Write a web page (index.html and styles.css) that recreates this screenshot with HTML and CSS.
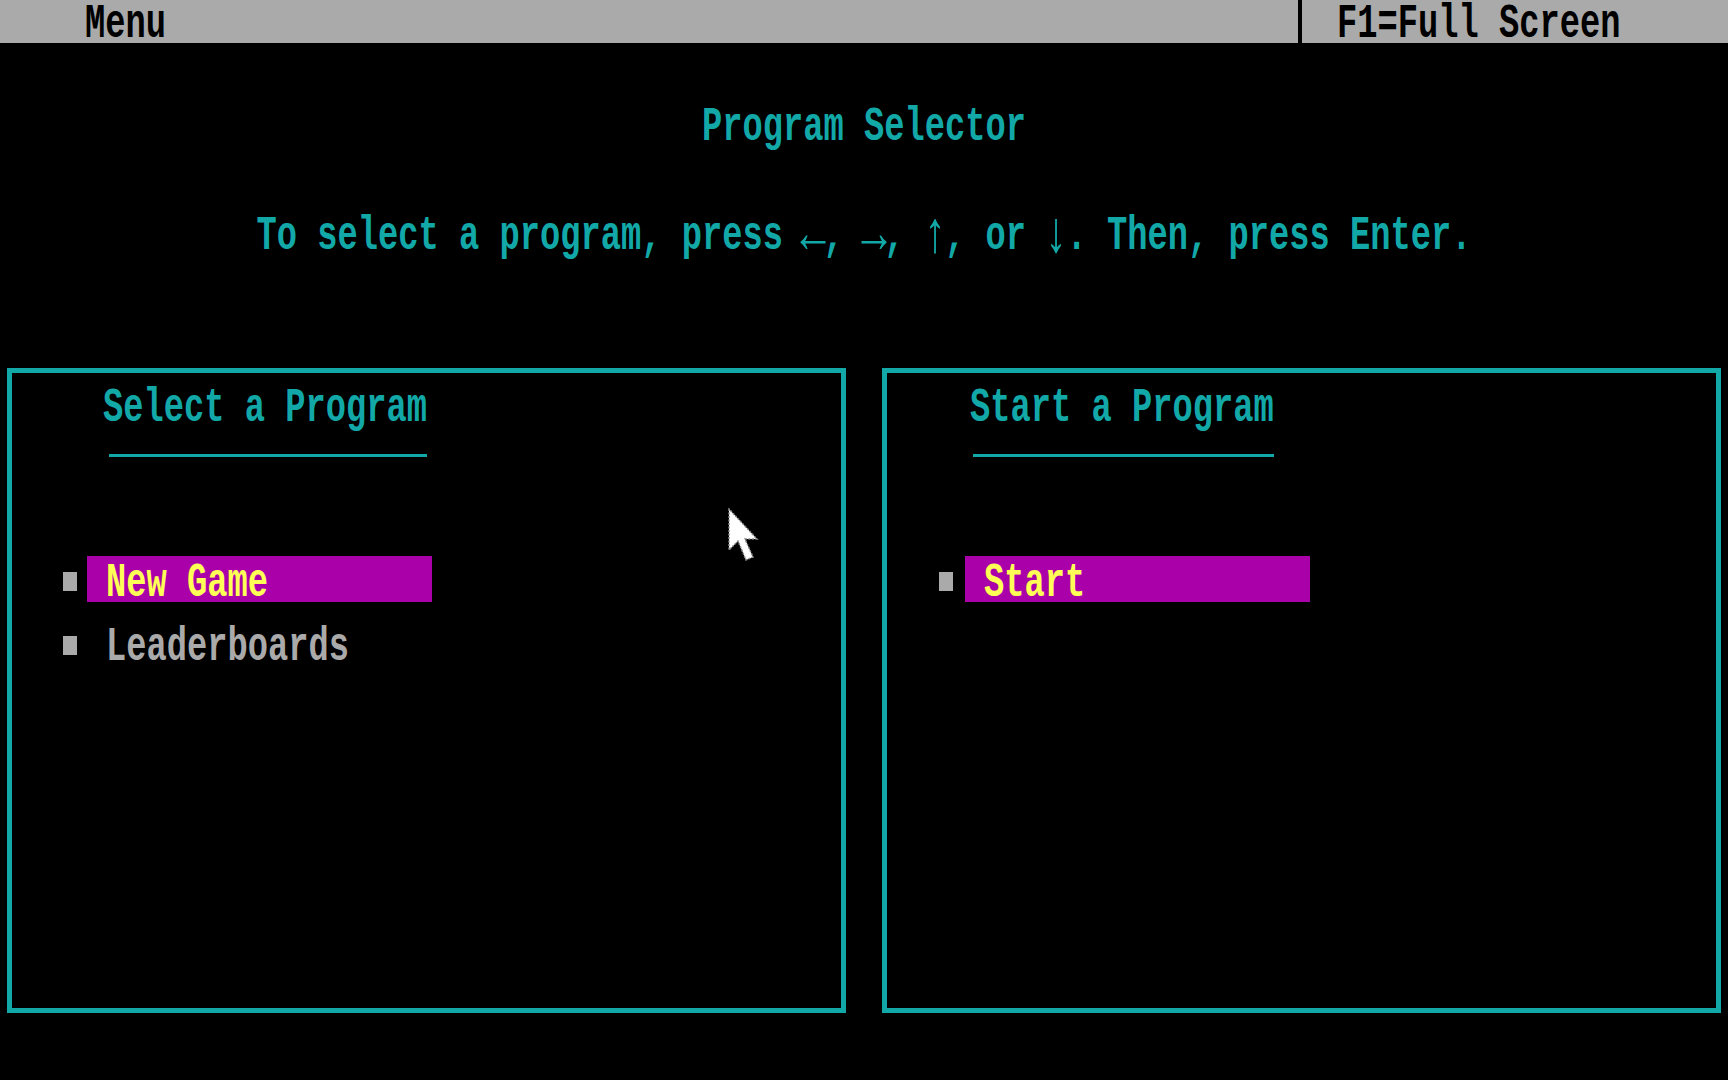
FILE: index.html
```html
<!DOCTYPE html>
<html lang="en">
  <head>
    <meta charset="UTF-8" />
    <meta name="viewport" content="width=device-width, initial-scale=1.0" />
    <title>Program Selector</title>
    <link rel="stylesheet" href="styles.css">
  </head>
  <body>
    <div class="menubar">
      <div class="menubar-left"><span class="txt">Menu</span></div>
      <div class="menubar-right"><span class="txt">F1=Full Screen</span></div>
    </div>

    <div class="screen">
      <h1 class="heading"><span class="txt">Program Selector</span></h1>
      <p class="hint"><span class="txt">To select a program, press <span class="arrow">←</span>, <span class="arrow">→</span>, <span class="arrow">↑</span>, or <span class="arrow">↓</span>. Then, press Enter.</span></p>

      <div class="panels">
        <section class="panel panel-select">
          <h2 class="panel-title"><span class="txt">Select a Program</span></h2>
          <ul class="items">
            <li class="item">
              <span class="bullet"></span>
              <span class="label active"><span class="txt">New Game</span></span>
            </li>
            <li class="item">
              <span class="bullet"></span>
              <span class="label"><span class="txt">Leaderboards</span></span>
            </li>
          </ul>
        </section>

        <section class="panel panel-start">
          <h2 class="panel-title"><span class="txt">Start a Program</span></h2>
          <ul class="items">
            <li class="item">
              <span class="bullet"></span>
              <span class="label active"><span class="txt">Start</span></span>
            </li>
          </ul>
        </section>
      </div>
    </div>

    <!-- mouse pointer -->
    <svg class="cursor" width="32" height="56" viewBox="0 0 32 56">
      <path d="M1 1 L1 42 L10 33 L18 52 L25 49 L17 31 L29 31 Z" fill="#fff" stroke="#8a8a8a" stroke-width="1.5" stroke-dasharray="2 1.5" />
    </svg>
  </body>
</html>
```

FILE: styles.css
```css
body {
  margin: 0;
  background-color: #000;
  color: #13a8a8;
  font-family: "Liberation Mono", "DejaVu Sans Mono", monospace;
  font-weight: bold;
  font-size: 33.75px;
  line-height: 38px;
  overflow: hidden;
  height: 1080px;
  position: relative;
}
.txt {
  display: inline-block;
  white-space: pre;
  transform: scaleY(1.44);
  transform-origin: 50% 50%;
}
.arrow {
  display: inline-block;
  width: 0.6em;
  text-align: center;
  transform: scale(1.25, 1.2);
}
.menubar {
  display: flex;
  height: 43px;
  background-color: #aaaaaa;
  color: #000;
}
.menubar-left {
  width: 1298px;
  padding: 5px 0 0 85px;
  box-sizing: border-box;
}
.menubar-right {
  flex: 1;
  border-left: 4px solid #000;
  padding: 5px 0 0 35px;
}
.screen {
  padding: 65px 7px 0;
}
.heading,
.hint {
  margin: 0;
  font-size: inherit;
  font-weight: inherit;
  text-align: center;
  height: 38px;
}
.hint {
  margin-top: 71px;
}
.panels {
  display: grid;
  grid-template-columns: 1fr 1fr;
  gap: 36px;
  margin-top: 113px;
}
.panel {
  height: 645px;
  box-sizing: border-box;
  border: 5px solid #13a8a8;
  padding-top: 16px;
  display: flex;
  flex-direction: column;
  align-items: flex-start;
}
.panel-title {
  margin: 0;
  font-size: inherit;
  font-weight: inherit;
  padding-bottom: 30px;
  background: linear-gradient(#13a8a8, #13a8a8) 6px 100% / calc(100% - 6px) 3px no-repeat;
}
.panel-select .panel-title {
  margin-left: 91px;
}
.panel-start .panel-title {
  margin-left: 83px;
  background-position: 3px 100%;
  background-size: calc(100% - 3px) 3px;
}
.items {
  list-style: none;
  margin: 99px 0 0 51px;
  padding: 0;
  display: flex;
  flex-direction: column;
  gap: 18px;
}
.panel-start .items {
  margin-left: 52px;
}
.item {
  display: flex;
  align-items: flex-start;
  gap: 10px;
}
.panel-start .item {
  gap: 12px;
}
.bullet {
  width: 14px;
  height: 19px;
  margin-top: 16px;
  background-color: #aaaaaa;
}
.label {
  width: 345px;
  height: 46px;
  box-sizing: border-box;
  padding: 8px 0 0 19px;
  color: #aaaaaa;
}
.label.active {
  background-color: #aa00aa;
  color: #ffff55;
}
.cursor {
  position: absolute;
  left: 728px;
  top: 508px;
}
```
